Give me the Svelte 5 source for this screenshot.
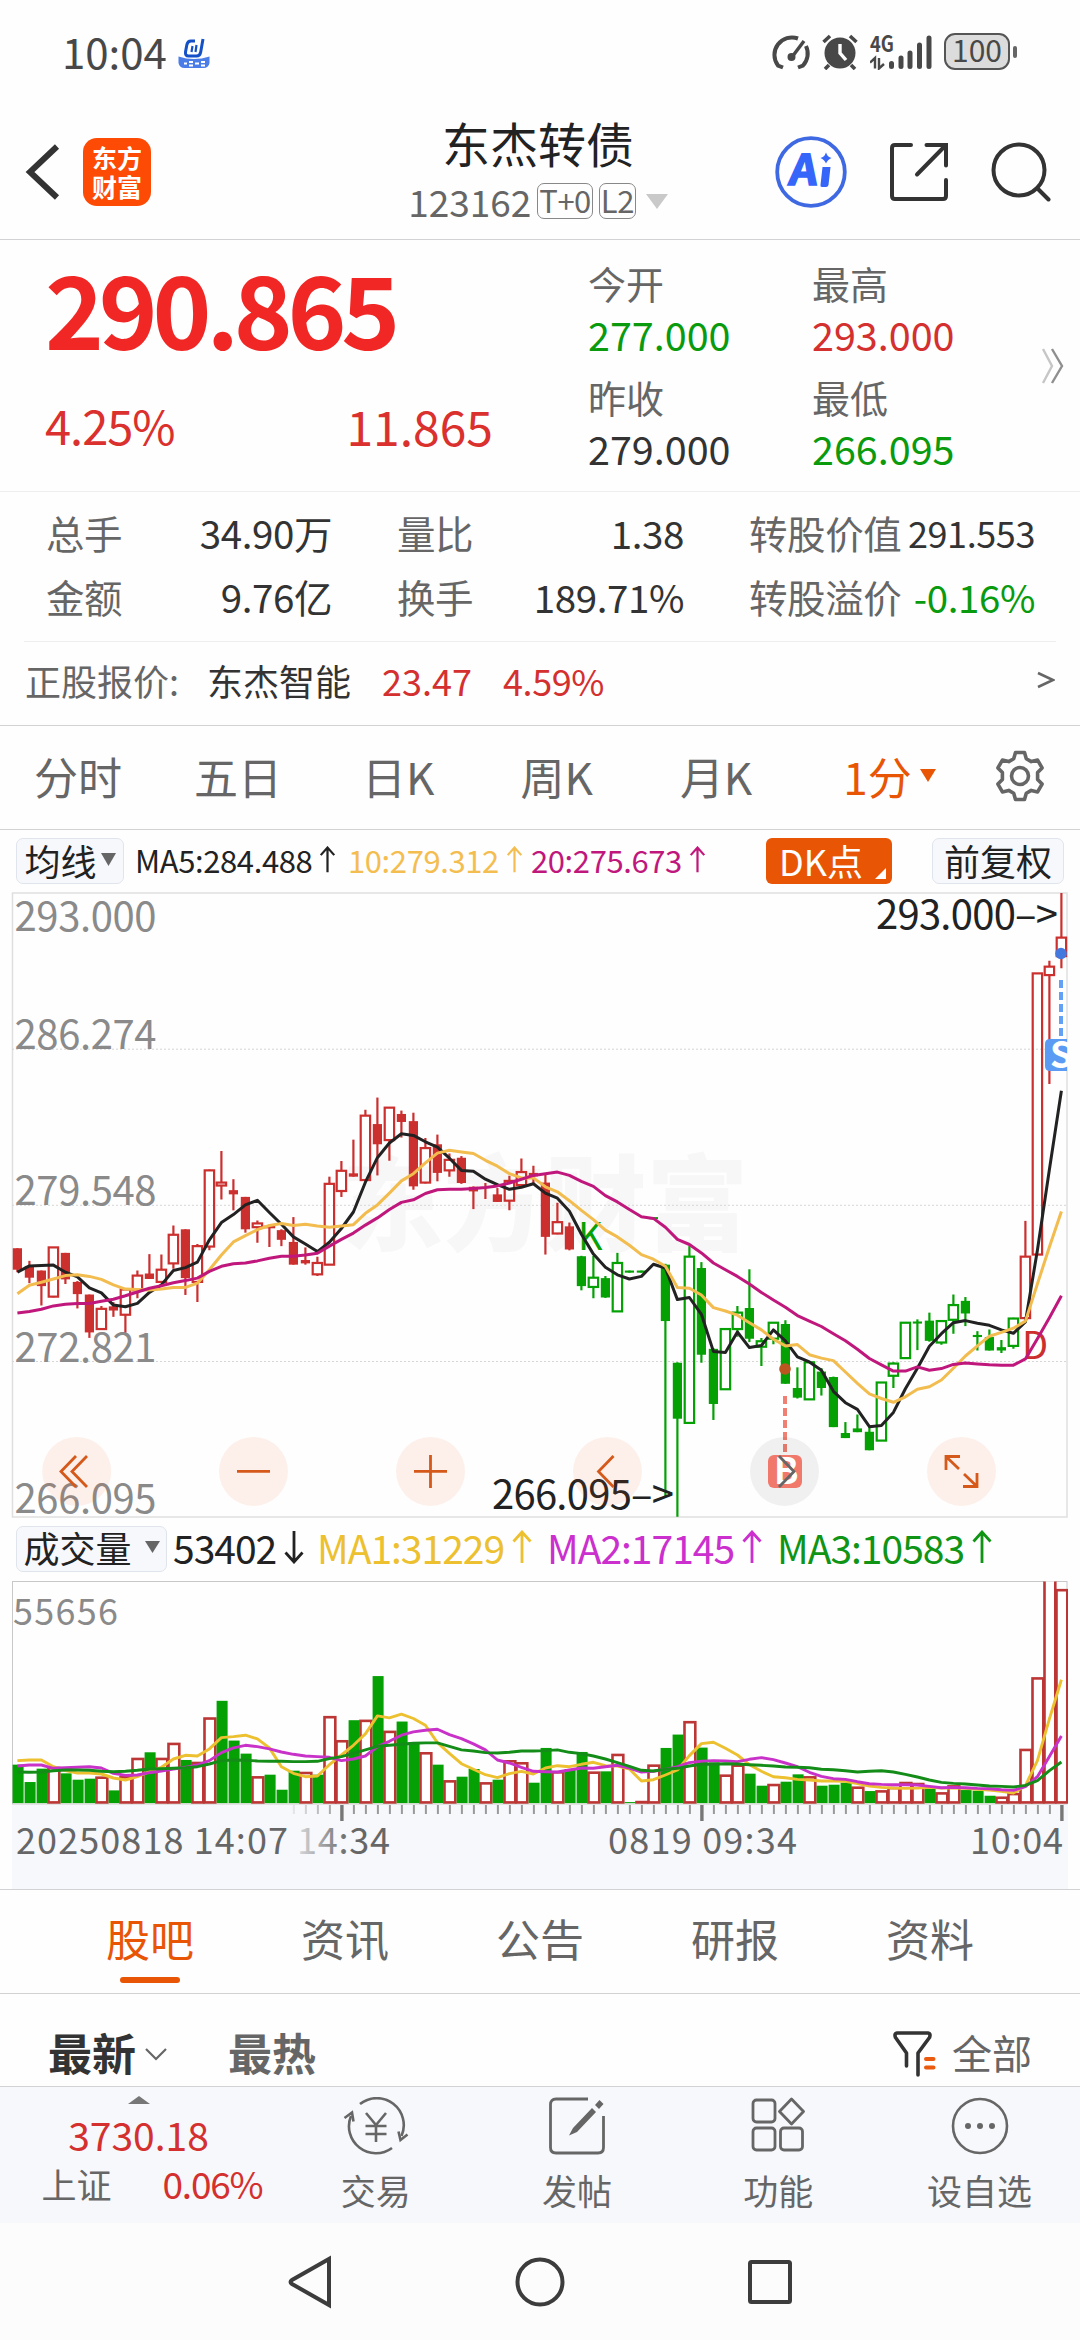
<script lang="ts">
	const quotes = [
		{ label: '今开', value: '277.000', tone: 'down' },
		{ label: '最高', value: '293.000', tone: 'up' },
		{ label: '昨收', value: '279.000', tone: '' },
		{ label: '最低', value: '266.095', tone: 'down' },
	];
	const stats = [
		{ label: '总手', value: '34.90万' },
		{ label: '量比', value: '1.38' },
		{ label: '转股价值', value: '291.553', small: true },
		{ label: '金额', value: '9.76亿' },
		{ label: '换手', value: '189.71%' },
		{ label: '转股溢价', value: '-0.16%', tone: 'down' },
	];
	const periods = ['分时', '五日', '日K', '周K', '月K'];
	const tabs = ['股吧', '资讯', '公告', '研报', '资料'];

	// kind, high, body top, body bottom, low
	// R/G filled, r/g hollow
	const candles: [string, number, number, number, number][] = [
		['R', 875, 875, 926, 932], ['R', 905, 917, 945, 958], ['R', 928, 928, 965, 1011], ['r', 873, 873, 990, 992],
		['R', 886, 886, 949, 960], ['R', 953, 955, 984, 1018], ['R', 985, 985, 1075, 1088], ['r', 1012, 1019, 1067, 1069],
		['R', 1003, 1013, 1023, 1038], ['r', 970, 973, 1033, 1075], ['r', 928, 940, 975, 994], ['R', 889, 935, 948, 948],
		['r', 890, 926, 955, 957], ['r', 821, 843, 911, 924], ['R', 830, 830, 946, 986], ['r', 865, 870, 955, 1003],
		['r', 688, 690, 871, 880], ['r', 644, 719, 726, 759], ['R', 711, 737, 747, 785], ['R', 753, 753, 830, 838],
		['r', 809, 816, 825, 862], ['r', 822, 824, 825, 872], ['R', 830, 832, 855, 870], ['R', 801, 860, 914, 914],
		['R', 873, 903, 911, 914], ['r', 895, 910, 937, 941], ['r', 705, 722, 914, 914], ['r', 668, 691, 739, 753],
		['R', 617, 697, 705, 705], ['r', 546, 560, 713, 713], ['R', 517, 580, 628, 702], ['r', 540, 541, 618, 667],
		['R', 548, 556, 575, 612], ['R', 553, 573, 728, 736], ['r', 613, 637, 719, 721], ['R', 605, 628, 696, 716],
		['r', 650, 665, 690, 705], ['R', 656, 660, 720, 722], ['R', 728, 729, 740, 782], ['R', 720, 737, 737, 758],
		['R', 732, 747, 765, 765], ['r', 703, 715, 762, 785], ['r', 662, 694, 725, 727], ['R', 679, 696, 704, 722],
		['R', 700, 719, 848, 890], ['r', 767, 813, 840, 842], ['R', 814, 823, 878, 880], ['G', 893, 894, 965, 975],
		['g', 893, 945, 967, 994], ['G', 941, 946, 992, 993], ['g', 886, 910, 1025, 1025], ['G', 928, 928, 933, 933],
		['G', 928, 928, 933, 933], ['G', 801, 801, 806, 806], ['G', 912, 914, 1048, 1465], ['G', 1146, 1147, 1280, 1513],
		['g', 870, 895, 1290, 1290], ['G', 908, 922, 1128, 1147], ['G', 1113, 1114, 1245, 1283], ['g', 1065, 1067, 1210, 1210],
		['g', 1012, 1028, 1067, 1085], ['G', 925, 1017, 1090, 1098], ['g', 1088, 1096, 1109, 1155], ['g', 1050, 1052, 1090, 1103],
		['G', 1046, 1055, 1197, 1197], ['G', 1158, 1207, 1230, 1232], ['g', 1143, 1146, 1234, 1234], ['G', 1160, 1168, 1207, 1225],
		['G', 1180, 1181, 1300, 1300], ['G', 1288, 1314, 1326, 1326], ['G', 1270, 1303, 1312, 1312], ['G', 1300, 1311, 1355, 1355],
		['g', 1193, 1194, 1332, 1332], ['g', 1146, 1149, 1178, 1207], ['g', 1051, 1052, 1136, 1136], ['G', 1044, 1049, 1054, 1117],
		['G', 1028, 1047, 1095, 1097], ['g', 1047, 1048, 1099, 1104], ['g', 985, 1010, 1045, 1078], ['G', 991, 1000, 1030, 1060],
		['G', 1072, 1081, 1086, 1118], ['G', 1068, 1086, 1118, 1118], ['G', 1093, 1110, 1118, 1124], ['g', 1040, 1042, 1107, 1114],
		['r', 810, 895, 1041, 1041], ['r', 221, 222, 890, 890], ['r', 192, 206, 226, 485], ['r', 31, 137, 181, 210],
	];
	const ma20 = [1029, 1025, 1020, 1012, 1008, 1006, 1006, 1001, 996, 988, 979, 970, 964, 957, 952, 946, 930, 918, 912, 910, 905, 899, 894, 894, 891, 887, 870, 854, 839, 820, 803, 783, 766, 760, 745, 736, 735, 735, 733, 731, 727, 720, 711, 702, 698, 694, 702, 716, 728, 750, 765, 783, 800, 804, 825, 854, 866, 886, 910, 926, 942, 960, 980, 998, 1015, 1035, 1048, 1061, 1078, 1095, 1115, 1137, 1152, 1167, 1167, 1157, 1165, 1161, 1151, 1148, 1150, 1152, 1153, 1153, 1138, 1090, 1040, 988];
	const ma10 = [983, 963, 956, 948, 940, 938, 942, 949, 962, 972, 973, 974, 972, 968, 968, 958, 926, 891, 860, 845, 831, 821, 816, 821, 818, 822, 825, 822, 819, 792, 772, 744, 715, 698, 672, 649, 642, 646, 650, 666, 680, 698, 708, 708, 729, 741, 762, 785, 807, 832, 848, 868, 890, 901, 918, 968, 970, 986, 1016, 1024, 1034, 1052, 1069, 1091, 1107, 1104, 1128, 1136, 1142, 1169, 1196, 1221, 1232, 1241, 1228, 1210, 1204, 1188, 1160, 1131, 1107, 1084, 1075, 1065, 1048, 960, 872, 788];
	const ma5 = [932, 917, 916, 915, 932, 943, 969, 981, 1010, 1014, 1006, 980, 962, 928, 921, 908, 855, 814, 795, 772, 761, 790, 818, 848, 865, 883, 861, 828, 789, 718, 660, 625, 603, 607, 622, 635, 661, 690, 692, 711, 724, 735, 730, 722, 744, 756, 787, 842, 889, 920, 938, 948, 942, 913, 922, 997, 992, 1032, 1120, 1123, 1074, 1111, 1106, 1069, 1095, 1133, 1145, 1165, 1215, 1242, 1258, 1299, 1296, 1265, 1209, 1160, 1108, 1078, 1052, 1047, 1053, 1058, 1069, 1077, 1050, 880, 688, 501];

	const volumes = 'G762 G814 G774 r772 G788 G807 G804 r801 G839 r800 r745 G725 r745 r700 G748 r757 r624 G571 G690 G729 r800 G792 G837 G780 r787 G792 r620 r692 G629 r631 G497 r664 G633 G695 r728 G762 r812 G798 G775 r818 G807 r752 r758 G816 G712 r785 G775 G724 r786 G782 r733 G874 r874 r765 G712 G672 r635 G711 G755 r795 r765 G789 G825 r823 G813 G791 r800 G825 G822 G816 r831 G841 r842 r832 r817 r820 G834 r848 r827 G838 G840 G855 r861 r850 r718 r504 r180 r240'
		.split(' ')
		.map((s) => ({ up: s[0] === 'r', top: Number(s.slice(1)) }));
	const vma1 = [750, 748, 748, 768, 780, 787, 787, 790, 802, 808, 798, 783, 770, 745, 734, 736, 715, 681, 678, 674, 685, 712, 768, 788, 798, 796, 762, 733, 704, 670, 616, 622, 611, 624, 644, 696, 728, 759, 776, 792, 801, 789, 782, 790, 772, 765, 768, 761, 755, 765, 766, 775, 811, 807, 793, 778, 735, 699, 695, 713, 733, 762, 782, 798, 801, 806, 808, 811, 811, 812, 819, 826, 830, 832, 833, 832, 830, 832, 832, 833, 836, 838, 842, 847, 825, 750, 625, 508];
	const vma2 = [766, 763, 763, 773, 771, 770, 768, 772, 788, 794, 793, 786, 781, 775, 770, 763, 750, 726, 712, 704, 708, 715, 724, 731, 736, 738, 740, 750, 745, 736, 708, 692, 674, 664, 659, 656, 672, 684, 700, 718, 748, 757, 770, 782, 783, 784, 778, 772, 773, 768, 764, 772, 784, 782, 776, 768, 756, 752, 750, 751, 753, 746, 741, 747, 757, 768, 785, 797, 804, 806, 813, 819, 821, 822, 822, 823, 827, 831, 830, 831, 833, 834, 837, 839, 828, 798, 738, 676];
	const vma3 = [784, 785, 784, 780, 778, 778, 779, 782, 783, 782, 779, 775, 774, 773, 771, 768, 760, 750, 748, 749, 751, 752, 752, 753, 753, 752, 744, 738, 728, 718, 707, 704, 701, 698, 697, 697, 707, 718, 721, 726, 727, 725, 721, 721, 720, 718, 725, 729, 736, 745, 756, 767, 779, 781, 776, 773, 766, 761, 761, 759, 760, 762, 764, 766, 769, 770, 771, 776, 777, 780, 784, 782, 780, 784, 791, 799, 808, 815, 818, 820, 823, 826, 827, 829, 824, 810, 780, 754];

	const x = (i: number) => 17.4 + i * 12;
	const py = (v: number) => (v - 31) * 0.4209;
	const vy = (v: number) => (v - 214) / 2.992;
	const line = (vals: number[], y: (v: number) => number) =>
		vals.map((v, i) => `${x(i).toFixed(1)},${y(v).toFixed(1)}`).join(' ');
	const color = (kind: string) => (kind.toLowerCase() === 'r' ? '#cb2f2e' : '#04a004');

	const controls = [76.7, 253.5, 430.5, 607.5, 784.5, 961.5];
	const axisTicks = Array.from({ length: 65 }, (_, k) => k + 23);
</script>

{#snippet arrow(down = false)}
	<svg class="arrow" class:flip={down} viewBox="0 0 20 34">
		<path d="M10 33V2M1.5 11.5 10 2l8.5 9.5" />
	</svg>
{/snippet}

<div class="screen">
	<div class="status">
		<span class="clock">10:04</span>
		<svg class="appdot" viewBox="0 0 32 32">
			<path d="M.5 18.500q15.500 5 31 0V25q-1 5-6 5h-19q-5 0-6-5z" fill="#4a7de8" />
			<path d="M17 3h-4q-3.500 0-4.200 4l-1.300 7q-.5 4 3 4h8q3.500 0 4.200-4L25 1" fill="none" stroke="#1450c8" stroke-width="3" />
			<path d="m14.500 8-1 6M18.500 7l-1 7" fill="none" stroke="#1450c8" stroke-width="2.200" />
			<path d="M6 25.500h3M11 24h4M11 27.500h4M17 25.500h4M23 24h4M23 27.500h4" stroke="#fff" stroke-width="2" />
		</svg>
		<div class="sysicons">
			<svg width="40" height="36" viewBox="0 0 40 36" fill="none" stroke="#484848" stroke-width="4">
				<path d="M12 33.500l-5-2A17.500 17.500 0 0 1 27 4.500M35 12a17.500 17.500 0 0 1-3 19.500l-5 2" />
				<path d="M21 23 33 7" stroke-width="3.400" />
				<circle cx="20.500" cy="23" r="3" fill="#484848" stroke-width="2" />
			</svg>
			<svg width="36" height="36" viewBox="0 0 36 36">
				<circle cx="18" cy="19" r="15.500" fill="#484848" />
				<path d="M18 10v9l6 7" fill="none" stroke="#fff" stroke-width="3.400" />
				<path d="m1.500 8 6.500-6M34.500 8 28 2M7 31l-4 4M29 31l4 4" stroke="#484848" stroke-width="3.600" />
			</svg>
			<svg class="signal" width="62" height="36" viewBox="0 0 62 36">
				<text x="0" y="17.500" textLength="24" lengthAdjust="spacingAndGlyphs">4G</text>
				<path d="M5 34.500V24L0 28.500M9 24v10.500L14 30" fill="none" stroke="#484848" stroke-width="2.400" />
				<path d="M21.500 29.500v3M31 24v8.500M40 19v13.500M49.500 11v21.500M59 4v28.500" stroke="#484848" stroke-width="5" stroke-linecap="round" />
			</svg>
			<div class="battery"><span>100</span></div>
			<i class="cap"></i>
		</div>
	</div>

	<header>
		<div class="brand">
			<svg width="36" height="58" viewBox="0 0 36 58"><path d="M32 3.500 5 29l27 25.500" fill="none" stroke="#333" stroke-width="6" /></svg>
			<div class="logo"><span>东方</span><span>财富</span></div>
		</div>
		<div class="title">
			<h1>东杰转债</h1>
			<div class="code">
				<span>123162</span><b>T+0</b><b>L2</b>
				<svg width="22" height="15" viewBox="0 0 22 15"><path d="M0 0h22L11 15z" fill="#c9c9c9" /></svg>
			</div>
		</div>
		<div class="actions">
			<svg width="72" height="72" viewBox="0 0 72 72">
				<circle cx="36" cy="36" r="33.800" fill="none" stroke="#3f69e2" stroke-width="3.800" />
				<text x="19" y="49" class="ai" transform="skewX(-7)" textLength="28" lengthAdjust="spacingAndGlyphs">A</text>
				<path d="M47.500 31h8l-2 18q-.5 2-2.500 2h-4q-2 0-1.500-2z" fill="#3665fa" />
				<path d="M51 16.500q1.500 4.500 5.500 5.500-4 1.500-5.500 5.500-1.500-4-5.500-5.500 4-1 5.500-5.500z" fill="#3665fa" />
			</svg>
			<svg width="58" height="58" viewBox="0 0 58 58" fill="none" stroke="#333" stroke-width="4" stroke-linecap="round">
				<path d="M21 2H5q-3 0-3 3v48q0 3 3 3h48q3 0 3-3V37" />
				<path d="M36.500 2H56v20.500M54 4 27 31.500" />
			</svg>
			<svg width="60" height="60" viewBox="0 0 60 60" fill="none" stroke="#333" stroke-width="4" stroke-linecap="round">
				<circle cx="28" cy="28" r="25.500" />
				<path d="m46.500 46.500 11 11" />
			</svg>
		</div>
	</header>

	<section class="quote">
		<div class="price">
			<strong>290.865</strong>
			<div class="change"><span>4.25%</span><span class="diff">11.865</span></div>
		</div>
		<div class="ohlc">
			{#each quotes as q}
				<div class="cell"><span class="label">{q.label}</span><span class={q.tone}>{q.value}</span></div>
			{/each}
		</div>
		<svg width="24" height="36" viewBox="0 0 24 36" fill="none" stroke-width="2.400">
			<path d="m2 1 9 17-9 17" stroke="#c6c6c6" /><path d="m11 1 10 17-10 17" stroke="#8f8f8f" />
		</svg>
	</section>

	<section class="stats">
		{#each stats as s}
			<div class="stat">
				<span class="label">{s.label}</span>
				<span class={s.tone} class:small={s.small}>{s.value}</span>
			</div>
		{/each}
	</section>

	<div class="underlying">
		<span class="label">正股报价:</span>
		<span class="name">东杰智能</span>
		<span class="up">23.47</span>
		<span class="up pct">4.59%</span>
		<svg width="18" height="18" viewBox="0 0 18 18"><path d="M1 2 16 9 1 16" fill="none" stroke="#666" stroke-width="2.600" /></svg>
	</div>

	<nav class="periods">
		{#each periods as p}
			<span>{p}</span>
		{/each}
		<span class="active">1分<svg width="16" height="13" viewBox="0 0 16 13"><path d="M0 0h16L8 13z" fill="#e85505" /></svg></span>
		<svg class="gear" width="52" height="52" viewBox="0 0 52 52" fill="none" stroke="#666" stroke-width="3.600" stroke-linejoin="round">
			<path d="M21.500 2.500h9l1.800 6.200 5 2.900 6.300-1.500 4.500 7.800-4.500 4.700v6.800l4.500 4.700-4.500 7.800-6.300-1.500-5 2.900-1.800 6.200h-9l-1.800-6.200-5-2.900-6.300 1.500-4.500-7.800 4.500-4.700v-6.800l-4.500-4.700 4.500-7.800 6.300 1.500 5-2.900z" />
			<circle cx="26" cy="26" r="8.500" />
		</svg>
	</nav>

	<div class="indicators">
		<div class="pill">均线<svg width="15" height="13" viewBox="0 0 15 13"><path d="M0 0h15L7.500 13z" fill="#666" /></svg></div>
		<span class="ma">MA5:284.488{@render arrow()}</span>
		<span class="ma yellow">10:279.312{@render arrow()}</span>
		<span class="ma magenta">20:275.673{@render arrow()}</span>
		<div class="dk">DK点<svg width="11" height="11" viewBox="0 0 11 11"><path d="M11 0v11H0z" fill="#fff" /></svg></div>
		<div class="pill adjust">前复权</div>
	</div>

	<svg class="kline" width="1080" height="626" viewBox="0 -1 1080 626">
		<text class="mark" x="342" y="350" textLength="406" lengthAdjust="spacingAndGlyphs">东方财富</text>
		<rect x="12.500" y="0" width="1054.500" height="624" fill="none" stroke="#dfdfdf" stroke-width="1.500" />
		{#each [156.2, 312.3, 468.5] as y}
			<path d="M12 {y}H1067" stroke="#d6d6d6" stroke-dasharray="2 2" />
		{/each}
		{#each [['293.000', 38], ['286.274', 156], ['279.548', 312], ['272.821', 468.5], ['266.095', 620]] as [t, y]}
			<text class="scale" x="14.500" {y} textLength="142">{t}</text>
		{/each}

		{#each candles as [k, high, top, bottom, low], i}
			{@const c = color(k)}
			{#if k === 'r' || k === 'g'}
				<path d="M{x(i)} {py(high)}V{py(top)}M{x(i)} {py(bottom)}V{py(low)}" stroke={c} stroke-width="2.200" />
				<rect x={x(i) - 4.7} y={py(top)} width="9.400" height={py(bottom) - py(top)} fill="none" stroke={c} stroke-width="2.200" />
			{:else}
				<path d="M{x(i)} {py(high)}V{py(low)}" stroke={c} stroke-width="2.200" />
				<rect x={x(i) - 4.6} y={py(top)} width="9.200" height={py(bottom) - py(top)} fill={c} />
			{/if}
		{/each}

		<text class="flag" x="578" y="357" fill="#04a004">K</text>
		<text class="flag" x="1022" y="466" fill="#cb2f2e">D</text>
		<g fill="none" stroke-width="3" stroke-linejoin="round">
			<polyline points={line(ma5, py)} stroke="#222" />
			<polyline points={line(ma10, py)} stroke="#f2bc4e" />
			<polyline points={line(ma20, py)} stroke="#c0177c" />
		</g>

		<text class="peak" x="876" y="36" textLength="182">293.000–&gt;</text>
		<text class="peak" x="492" y="616" textLength="182">266.095–&gt;</text>

		<circle cx="1061" cy="60.500" r="5.800" fill="#4379df" />
		<path d="M1061 87v57" stroke="#62a1f5" stroke-width="4" stroke-dasharray="8 4" />
		<path d="M1067 146h-17q-5 0-5 5v22q0 5 5 5h17z" fill="#5b9bf4" />
		<svg x="1045" y="140" width="23" height="44"><text class="badge" x="5" y="35">S</text></svg>

		<circle cx="785" cy="476" r="5.800" fill="#bb5620" />
		<path d="M785 503v57" stroke="#ef8073" stroke-width="4" stroke-dasharray="8 4" />
		{#each controls as cx, i}
			<circle {cx} cy="578.400" r="34.500" fill={i === 4 ? 'rgba(0,0,0,.055)' : 'rgba(240,90,20,.085)'} />
		{/each}
		<rect x="768" y="562" width="34" height="33" rx="6" fill="#f0796c" />
		<text class="badge" x="774" y="591">B</text>
		<g fill="none" stroke="#d4591b" stroke-width="2.800">
			<path d="M76 563 61 578.500 76 594M87 563 72 578.500 87 594" />
			<path d="M237 578.400h33" />
			<path d="M414 578.400h33M430.500 562v33" />
			<path d="m613.500 563-15 15.500 15 15.500" />
			<path d="M946 577v-13.500h14M947 564.500l12 11.500M977 580v13.500h-14M976 592.500l-12-11.500" />
		</g>
		<path d="m779 563 15 15.500-15 15.500" fill="none" stroke="#666" stroke-width="2.800" />
	</svg>

	<div class="volhead">
		<div class="pill">成交量<svg width="15" height="12" viewBox="0 0 15 12"><path d="M0 0h15L7.500 12z" fill="#666" /></svg></div>
		<span>53402{@render arrow(true)}</span>
		<span class="gold">MA1:31229{@render arrow()}</span>
		<span class="violet">MA2:17145{@render arrow()}</span>
		<span class="green">MA3:10583{@render arrow()}</span>
	</div>

	<svg class="volume" width="1080" height="224" viewBox="0 -.5 1080 224">
		<defs><clipPath id="frame"><rect x="12" y="0" width="1056" height="224" /></clipPath></defs>
		<rect x="12.500" y="0" width="1054.500" height="222.500" fill="none" stroke="#c8c8c8" />
		<text class="scale" x="13" y="43" textLength="105">55656</text>
		<g clip-path="url(#frame)">
			{#each volumes as v, i}
				{#if v.up}
					<rect x={x(i) - 4.9} y={vy(v.top)} width="10.800" height={vy(875) - vy(v.top)} fill="#fff" stroke="#bb3635" stroke-width="2.600" />
				{:else}
					<rect x={x(i) - 4.8} y={vy(v.top)} width="11" height={vy(877) - vy(v.top)} fill="#04a004" />
				{/if}
			{/each}
			<g fill="none" stroke-width="2.900" stroke-linejoin="round">
				<polyline points={line(vma1, vy)} stroke="#ecc02f" />
				<polyline points={line(vma2, vy)} stroke="#c832c8" />
				<polyline points={line(vma3, vy)} stroke="#148c18" />
			</g>
		</g>
	</svg>

	<svg class="axis" width="1080" height="84" viewBox="0 0 1080 84">
		<defs>
			<linearGradient id="fade" gradientUnits="userSpaceOnUse" x1="290" x2="350" y1="0" y2="0">
				<stop offset="0" stop-color="#666" stop-opacity="0.100" /><stop offset="1" stop-color="#666" />
			</linearGradient>
		</defs>
		<rect x="12" width="1056" height="84" fill="#f7f8fb" />
		{#each axisTicks as i}
			{@const major = i === 27 || i === 57 || i === 87}
			<path d="M{x(i) + 0.5} 0V{major ? 16 : 9}" stroke={major ? '#777' : '#999'} stroke-width={major ? 3.4 : 2} opacity={i < 27 ? (i - 22) / 5 : 1} />
		{/each}
		<text x="16" y="48.500" textLength="272">20250818 14:07</text>
		<text x="297" y="48.500" textLength="93" fill="url(#fade)">14:34</text>
		<text x="608" y="48.500" textLength="189">0819 09:34</text>
		<text x="970" y="48.500" textLength="93">10:04</text>
	</svg>

	<nav class="tabs">
		{#each tabs as t, i}
			<span class:active={i === 0}>{t}</span>
		{/each}
	</nav>

	<div class="sort">
		<b>最新</b>
		<svg width="22" height="14" viewBox="0 0 22 14"><path d="m1 2 10 10L21 2" fill="none" stroke="#666" stroke-width="2.200" /></svg>
		<b class="hot">最热</b>
		<svg class="funnel" width="44" height="46" viewBox="0 0 44 46" fill="none" stroke="#333" stroke-width="3.600" stroke-linejoin="round" stroke-linecap="round">
			<path d="M13.500 35V22L2.500 6.500Q1 2.500 4 2h31q3 .5 1.500 4.500L25 22v22" />
			<path d="M33 28h7.500M33 36.500h7.500" stroke="#ea5b10" stroke-width="4" />
		</svg>
		<span>全部</span>
	</div>

	<footer>
		<div class="index">
			<svg width="22" height="8" viewBox="0 0 22 8"><path d="M0 8 11 0l11 8z" fill="#777" /></svg>
			<span class="up">3730.18</span>
			<div><span>上证</span><span class="up">0.06%</span></div>
		</div>
		<div class="item">
			<svg width="66" height="58" viewBox="0 0 66 58" fill="none" stroke="#666" stroke-width="2.600">
				<path d="M17 7A27 27 0 0 1 58.500 39M49 51A27 27 0 0 1 8 19" />
				<path d="M1.500 21 9 15.500l1.500 9M64.500 37.500 57.500 43l-2-8.500" />
				<path d="m23 16 10 12 10-12M33 28v17M22.500 29h21M22.500 37h21" />
			</svg>
			<span>交易</span>
		</div>
		<div class="item">
			<svg width="58" height="58" viewBox="0 0 58 58" fill="none" stroke="#666" stroke-width="2.800">
				<path d="M40 2H8Q2.500 2 2.500 7.500v43Q2.500 56 8 56h42q5.500 0 5.500-5.500V19" />
				<path d="m25 31 19-20 4 4-19 20-8 3.500zM47 8l4.500-5 4 4-4.500 5z" fill="#666" stroke="none" />
			</svg>
			<span>发帖</span>
		</div>
		<div class="item">
			<svg width="54" height="56" viewBox="0 0 54 56" fill="none" stroke="#666" stroke-width="2.800" stroke-linejoin="round">
				<rect x="2" y="3" width="22" height="22" rx="3.500" />
				<rect x="2" y="31" width="22" height="22" rx="3.500" />
				<rect x="29.500" y="31" width="22" height="22" rx="3.500" />
				<path d="M40.500 2 52.500 14.500l-12 12.500-12-12.500z" />
			</svg>
			<span>功能</span>
		</div>
		<div class="item">
			<svg width="58" height="58" viewBox="0 0 58 58">
				<circle cx="29" cy="29" r="27" fill="none" stroke="#666" stroke-width="2.600" />
				<g fill="#666"><circle cx="17" cy="29" r="3" /><circle cx="29" cy="29" r="3" /><circle cx="41" cy="29" r="3" /></g>
			</svg>
			<span>设自选</span>
		</div>
	</footer>

	<div class="sysnav">
		<svg width="46" height="54" viewBox="0 0 46 54"><path d="M42 4v46L5 29q-3-2 0-4z" /></svg>
		<svg width="50" height="50" viewBox="0 0 50 50"><circle cx="25" cy="25" r="22.500" /></svg>
		<svg width="46" height="46" viewBox="0 0 46 46"><rect x="3" y="3" width="40" height="40" rx="1.500" /></svg>
	</div>
</div>

<style>
	:global(body) {
		background: #fefefe;
	}

	.screen {
		width: 1080px;
		height: 2340px;
		overflow: hidden;
		display: flex;
		flex-direction: column;
		font-family: "Noto Sans CJK SC", sans-serif;
		line-height: 1;
		color: #333;
		white-space: nowrap;
		background: #fefefe;
	}
	.screen > * {
		box-sizing: border-box;
		flex: none;
	}
	svg {
		display: block;
		flex: none;
	}
	.label {
		color: #666;
	}
	.up {
		color: #d3302f;
	}
	.down {
		color: #0a9a0e;
	}

	.status {
		height: 108px;
		display: flex;
		align-items: center;
		padding: 0 63px 0 62px;
		color: #484848;
	}
	.clock {
		font-size: 42px;
		margin-top: -6px;
	}
	.appdot {
		width: 32px;
		height: 32px;
		margin-left: 11px;
	}
	.sysicons {
		margin-left: auto;
		display: flex;
		align-items: center;
		margin-top: -5px;
	}
	.sysicons svg:nth-child(2) {
		margin-left: 11px;
	}
	.signal {
		margin-left: 12px;
	}
	.signal text {
		font-size: 22px;
		font-weight: 700;
		fill: #484848;
	}
	.battery {
		box-sizing: border-box;
		width: 66px;
		height: 37px;
		margin-left: 12px;
		border: 2.500px solid #555;
		border-radius: 11px;
		background: #dcdcdc;
		font-size: 30px;
		text-align: center;
		line-height: 29px;
	}
	.cap {
		width: 4px;
		height: 12px;
		margin-left: 3px;
		border-radius: 2px;
		background: #666;
	}

	header {
		height: 132px;
		display: grid;
		grid-template-columns: 1fr auto 1fr;
		align-items: center;
		padding: 0 29px 4px 25px;
		border-bottom: 1.500px solid #d2d2d4;
	}
	.brand {
		display: flex;
		align-items: center;
	}
	.logo {
		width: 68px;
		height: 68px;
		margin-left: 22px;
		border-radius: 14px;
		background: #fd4a04;
		color: #fff;
		font-size: 25px;
		font-weight: 700;
		display: flex;
		flex-direction: column;
		align-items: center;
		justify-content: center;
		gap: 4px;
	}
	h1 {
		margin: -6px 0 17px;
		font-size: 48px;
		font-weight: 400;
		color: #222;
		text-align: center;
	}
	.code {
		display: flex;
		align-items: center;
		font-size: 37px;
		color: #666;
	}
	.code b {
		font-weight: 400;
		font-size: 31px;
		line-height: 31px;
		height: 34px;
		padding: 0 1px;
		margin-left: 6px;
		letter-spacing: -.5px;
		border: 1.500px solid #888;
		border-radius: 7px;
	}
	.code svg {
		margin-left: 10px;
	}
	.actions {
		display: flex;
		align-items: center;
		justify-content: flex-end;
		gap: 43px;
	}
	.ai {
		font-size: 42px;
		font-weight: 700;
		fill: #3665fa;
		stroke: #3665fa;
		stroke-width: 1.600;
	}

	.quote {
		height: 252px;
		display: flex;
		align-items: center;
		border-bottom: 1px solid #eee;
		padding: 0 15px 0 45px;
	}
	.price {
		width: 543px;
	}
	.price strong {
		display: block;
		font-size: 100px;
		letter-spacing: -5.200px;
		color: #f12725;
		margin: -15px 0 33px;
	}
	.change {
		width: 448px;
		display: flex;
		justify-content: space-between;
		font-size: 47px;
		color: #da302e;
		letter-spacing: -1px;
		line-height: 70px;
	}
	.diff {
		font-size: 48px;
		letter-spacing: 0;
	}
	.ohlc {
		width: 453px;
		display: grid;
		grid-template-columns: 224px 1fr;
		row-gap: 24px;
	}
	.cell {
		display: flex;
		flex-direction: column;
		gap: 12px;
		font-size: 39.500px;
	}
	.cell .label {
		font-size: 38px;
		line-height: 38px;
	}

	.stats {
		height: 150px;
		display: grid;
		grid-template-columns: 286px 287px 286px;
		column-gap: 65px;
		row-gap: 25px;
		align-content: center;
		margin: 0 24px;
		padding: 0 21px 5px 22px;
		border-bottom: 1.500px solid #eee;
	}
	.stat {
		display: flex;
		justify-content: space-between;
		align-items: center;
		font-size: 38.500px;
		letter-spacing: -.4px;
	}
	.small {
		font-size: 36px;
	}

	.underlying {
		height: 84px;
		display: flex;
		align-items: center;
		padding: 0 25px 8px 25px;
		font-size: 36px;
		border-bottom: 1.500px solid #d2d2d4;
	}
	.name {
		margin: 0 31px 0 28px;
	}
	.pct {
		margin-left: 31px;
		letter-spacing: -.4px;
	}
	.underlying svg {
		margin-left: auto;
	}

	.periods {
		height: 104px;
		display: flex;
		align-items: center;
		padding: 0 34px 4px;
		font-size: 44px;
		color: #666;
		border-bottom: 1.500px solid #d2d2d4;
	}
	.periods span {
		margin-right: 72px;
	}
	.periods span:nth-child(2) {
		margin-right: 80px;
	}
	.periods span:nth-child(3) {
		margin-right: 86px;
	}
	.periods span:nth-child(4) {
		margin-right: 87px;
	}
	.periods span:nth-child(5) {
		margin-right: 91px;
	}
	.periods .active {
		display: flex;
		align-items: center;
		gap: 8px;
		margin-right: 0;
		color: #e85505;
	}
	.gear {
		margin-left: auto;
	}

	.indicators {
		height: 62px;
		display: flex;
		align-items: center;
		padding: 0 16px;
		color: #222;
	}
	.pill {
		box-sizing: border-box;
		height: 46px;
		display: flex;
		align-items: center;
		justify-content: center;
		gap: 4px;
		border: 1.500px solid #e0e4ec;
		border-radius: 7px;
		background: #f7f8fb;
		font-size: 36px;
		line-height: 40px;
		color: #222;
		padding-bottom: 3px;
	}
	.indicators .pill {
		width: 108px;
	}
	.ma {
		width: 213px;
		margin-left: 11px;
		padding-bottom: 3px;
		font-size: 31px;
		letter-spacing: -.4px;
		display: flex;
		align-items: center;
	}
	.ma.yellow,
	.ma.magenta {
		width: 183px;
		margin-left: 0;
	}
	.yellow {
		color: #f4bd50;
	}
	.magenta {
		color: #c0177c;
	}
	.arrow {
		width: 20px;
		height: 34px;
		fill: none;
		stroke: currentColor;
		stroke-width: 2.800;
		margin-left: 8px;
	}
	.ma .arrow {
		width: 17px;
		height: 27px;
		margin-left: 7px;
	}
	.flip {
		transform: rotate(180deg);
	}
	.dk {
		width: 126px;
		height: 46px;
		box-sizing: border-box;
		margin-left: auto;
		padding: 0 6px 3px 13px;
		display: flex;
		align-items: center;
		justify-content: space-between;
		border-radius: 6px;
		background: #e85505;
		color: #fff;
		font-size: 36px;
	}
	.dk svg {
		align-self: flex-end;
		margin-bottom: 2px;
	}
	.indicators .adjust {
		width: 132px;
		margin-left: 40px;
	}

	.scale {
		font-size: 40px;
		fill: #8a8a8a;
	}
	.volume .scale {
		font-size: 36px;
	}
	.peak {
		font-size: 40px;
		fill: #222;
	}
	.flag {
		font-size: 38px;
	}
	.badge {
		font-size: 36px;
		font-weight: 700;
		fill: #fff;
	}
	.mark {
		font-size: 104px;
		font-weight: 900;
		fill: #f7f7f7;
	}

	.volhead {
		height: 63px;
		display: flex;
		align-items: center;
		padding: 0 16px 2px;
		font-size: 39px;
		color: #222;
	}
	.volhead .pill {
		width: 151px;
		margin-right: 6px;
		gap: 13px;
	}
	.volhead span {
		display: flex;
		align-items: center;
		width: 230px;
		padding-bottom: 3px;
		letter-spacing: -1px;
	}
	.volhead .pill + span {
		width: 144px;
	}
	.gold {
		color: #ecc02f;
	}
	.violet {
		color: #cb2fcd;
	}
	.green {
		color: #109415;
	}

	.axis text {
		font-size: 36px;
		fill: #666;
	}
	.axis text[fill] {
		fill: url(#fade);
	}

	.tabs {
		height: 105px;
		display: grid;
		grid-template-columns: repeat(5, 195px);
		justify-content: center;
		border-top: 1.500px solid #d2d2d4;
		border-bottom: 1.500px solid #d2d2d4;
		font-size: 44px;
		line-height: 97px;
		text-align: center;
		color: #666;
	}
	.tabs span {
		display: flex;
		flex-direction: column;
		align-items: center;
	}
	.tabs .active {
		color: #e85505;
	}
	.tabs .active::after {
		content: '';
		width: 60px;
		height: 6px;
		margin-top: -10px;
		border-radius: 3px;
		background: #e85505;
	}

	.sort {
		height: 93px;
		display: flex;
		align-items: center;
		padding: 24px 48px 0;
		font-size: 44px;
		border-bottom: 1.500px solid #d2d2d4;
	}
	.sort > svg:nth-child(2) {
		margin: 4px 61px 0 9px;
	}
	.hot {
		color: #666;
	}
	.funnel {
		margin: 3px 0 0 auto;
	}
	.sort span {
		margin-left: 15px;
		font-size: 40px;
		color: #666;
	}

	footer {
		height: 136px;
		display: grid;
		grid-template-columns: 275px repeat(4, 201.300px);
		background: #f7f8fb;
		color: #666;
	}
	.index {
		display: flex;
		flex-direction: column;
		align-items: center;
		padding: 9px 0 0 2px;
		font-size: 39px;
	}
	.index > span {
		margin: 11px 0 11px;
	}
	.index div {
		width: 221px;
		margin-left: 27px;
		display: flex;
		justify-content: space-between;
		align-items: center;
		font-size: 35px;
	}
	.index div .up {
		font-size: 37px;
		letter-spacing: -1.200px;
	}
	.item {
		display: flex;
		flex-direction: column;
		align-items: center;
		justify-content: space-between;
		padding: 10px 0 16px;
		font-size: 35px;
	}

	.sysnav {
		flex: 1;
		display: flex;
		justify-content: center;
		align-items: center;
		gap: 182px;
		background: #fcfcfc;
	}
	.sysnav svg {
		fill: none;
		stroke: #3c3c3c;
		stroke-width: 4;
	}
</style>
